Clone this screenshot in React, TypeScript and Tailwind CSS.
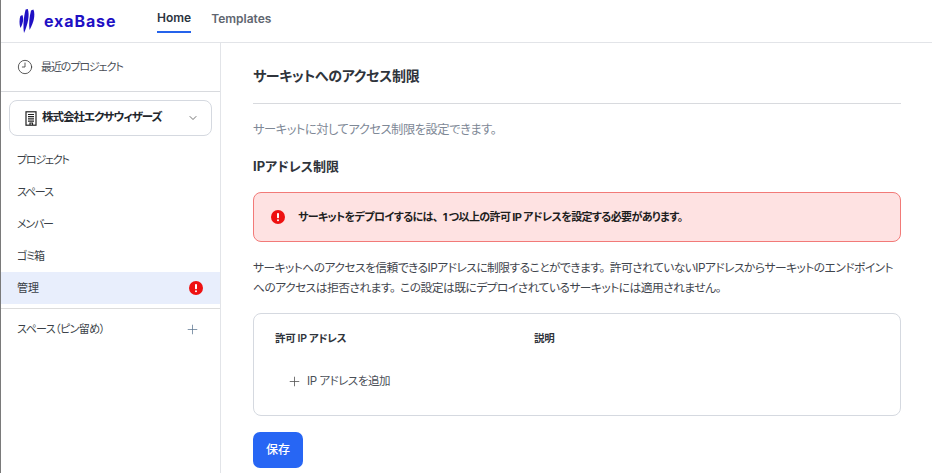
import React from "react";
import { ChevronDown, Plus, Clock9 } from "lucide-react";

const font = "font-['Inter','Noto_Sans_CJK_JP',sans-serif] [font-feature-settings:'palt']";

function Logo() {
  return (
    <div className="flex items-center gap-[8px]">
      <svg width="17" height="24" viewBox="0 0 17 24" fill="#1f10c4">
        <path d="M1.4 7 L3.4 6 C4.8 9.5 4.4 14 1.4 19 C0.2 15 0.2 10.5 1.4 7Z" />
        <path d="M6.6 0.6 L8.8 0 C10.8 6 9 15 5 24 C3.8 17 4.8 7.5 6.6 0.6Z" />
        <path d="M12 1.4 L14.4 0.6 C16.6 6 14.8 13.5 10.6 21 C9.6 15 10.4 8 12 1.4Z" />
      </svg>
      <span className="text-[16px] font-bold tracking-[0.9px] text-[#1f10c4] leading-none font-['Inter',sans-serif]">exaBase</span>
    </div>
  );
}

function ErrorDot({ size }: { size: number }) {
  return (
    <svg width={size} height={size} viewBox="0 0 14 14">
      <circle cx="7" cy="7" r="7" fill="#ee1111" />
      <rect x="6" y="3" width="2" height="5.2" rx="0.8" fill="#fff" />
      <rect x="6" y="9.2" width="2" height="2" rx="1" fill="#fff" />
    </svg>
  );
}

function BuildingIcon() {
  return (
    <svg width="12" height="15" viewBox="0 0 12 15" fill="none" stroke="#222" strokeWidth="1.2">
      <rect x="1" y="0.8" width="10" height="13.4" />
      <path d="M3 3.5H9M3 5.7H9M3 7.9H9M3 10.1H9M5 14V12H7.5V14" />
    </svg>
  );
}

function NavItem({ label, active, kanji }: { label: string; active?: boolean; kanji?: boolean }) {
  return (
    <div className={`h-[32px] pl-[16px] pr-[17px] flex items-center justify-between text-[11px] text-[#3a3f47] ${kanji ? "tracking-[0px]" : "tracking-[-1.2px]"} ${active ? "bg-[#e8eefc]" : ""}`}>
      <span>{label}</span>
      {active && <ErrorDot size={14} />}
    </div>
  );
}

function Stop({ children }: { children: string }) {
  return <span className="mr-[5px]">{children}</span>;
}

export default function App() {
  return (
    <div className={`w-[932px] h-[473px] overflow-hidden bg-white flex flex-col border-l border-[#7a7a7a] ${font}`}>
      <header className="h-[43px] shrink-0 border-b border-[#e2e4e8] flex pl-[18px]">
        <div className="w-[138px] flex items-center"><Logo /></div>
        <nav className="flex gap-[20px] text-[12px] font-semibold">
          <div className="h-[33px] pt-[4px] flex items-center border-b-2 border-[#2563eb] text-[#2b3440]">Home</div>
          <div className="h-[33px] pt-[4px] flex items-center text-[#5f6670]">Templates</div>
        </nav>
      </header>
      <div className="flex flex-1 min-h-0">
        <aside className="w-[220px] shrink-0 border-r border-[#e2e4e8]">
          <div className="h-[49px] border-b border-[#d8dade] flex items-center gap-[8px] pl-[16px] text-[11px] tracking-[-1.1px] text-[#4b5058]">
            <Clock9 size={16} strokeWidth={1.2} className="text-[#333]" />
            <span className="pt-[1px]">最近のプロジェクト</span>
          </div>
          <div className="pt-[8px] pl-[8px] pr-[8px]">
            <div className="h-[36px] border border-[#d5d9e0] rounded-[8px] flex items-center pl-[15px] pr-[12px] justify-between">
              <div className="flex items-center gap-[5px] text-[11.5px] tracking-[-1px] font-bold text-[#22262c] whitespace-nowrap">
                <BuildingIcon />
                <span>株式会社エクサウィザーズ</span>
              </div>
              <ChevronDown size={12} strokeWidth={1.5} className="text-[#444]" />
            </div>
          </div>
          <div className="mt-[8px] border-b border-[#dcdcdc] pb-[4px]">
            <NavItem label="プロジェクト" />
            <NavItem label="スペース" />
            <NavItem label="メンバー" />
            <NavItem label="ゴミ箱" />
            <NavItem label="管理" active kanji />
          </div>
          <div className="h-[40px] pl-[16px] pr-[20px] flex items-center justify-between text-[11px] tracking-[-0.6px] text-[#3a3f47]">
            <span>スペース（ピン留め）</span>
            <Plus size={15} strokeWidth={1.2} className="text-[#5c7590]" />
          </div>
        </aside>
        <main className="flex-1 min-w-0 pl-[32px] pr-[31px]">
          <div className="h-[61px] border-b border-[#d8dade] flex items-center pt-[4px] text-[14px] tracking-[-0.3px] font-bold text-[#2f343b]">サーキットへのアクセス制限</div>
          <p className="mt-[16px] text-[12.25px] tracking-[-0.45px] leading-[20px] text-[#7e8896]">サーキットに対してアクセス制限を設定できます。</p>
          <h2 className="mt-[16px] text-[13px] leading-[20px] font-bold text-[#2f343b]">IPアドレス制限</h2>
          <div className="mt-[16px] h-[50px] rounded-[8px] border border-[#f27a78] bg-[#fee2e2] flex items-center pl-[17px] gap-[13px] text-[11px] tracking-[-0.62px] font-bold text-[#1e1e1e]">
            <ErrorDot size={14} />
            <span>サーキットをデプロイするには<Stop>、</Stop>1 つ以上の許可 IP アドレスを設定する必要があります。</span>
          </div>
          <p className="mt-[16px] text-[11.75px] tracking-[-0.53px] leading-[20px] text-[#3f454d] whitespace-nowrap">サーキットへのアクセスを信頼できるIPアドレスに制限することができます<Stop>。</Stop>許可されていないIPアドレスからサーキットのエンドポイント<br />へのアクセスは拒否されます<Stop>。</Stop>この設定は既にデプロイされているサーキットには適用されません。</p>
          <div className="mt-[15px] h-[103px] rounded-[8px] border border-[#d5d9e0] pl-[21px] pt-[16px]">
            <div className="flex text-[10.5px] tracking-[-0.35px] font-semibold text-[#2f343b] leading-[17px]">
              <div className="w-[259px]">許可 IP アドレス</div>
              <div>説明</div>
            </div>
            <div className="mt-[26px] ml-[12px] flex items-center gap-[5px] text-[11.5px] tracking-[-0.45px] text-[#4b5058] leading-[17px]">
              <Plus size={15} strokeWidth={1.3} className="text-[#555]" />
              <span>IP アドレスを追加</span>
            </div>
          </div>
          <button className="mt-[16px] w-[50px] h-[36px] rounded-[7px] bg-[#2766f4] text-white text-[12px] font-medium flex items-center justify-center">保存</button>
        </main>
      </div>
    </div>
  );
}
